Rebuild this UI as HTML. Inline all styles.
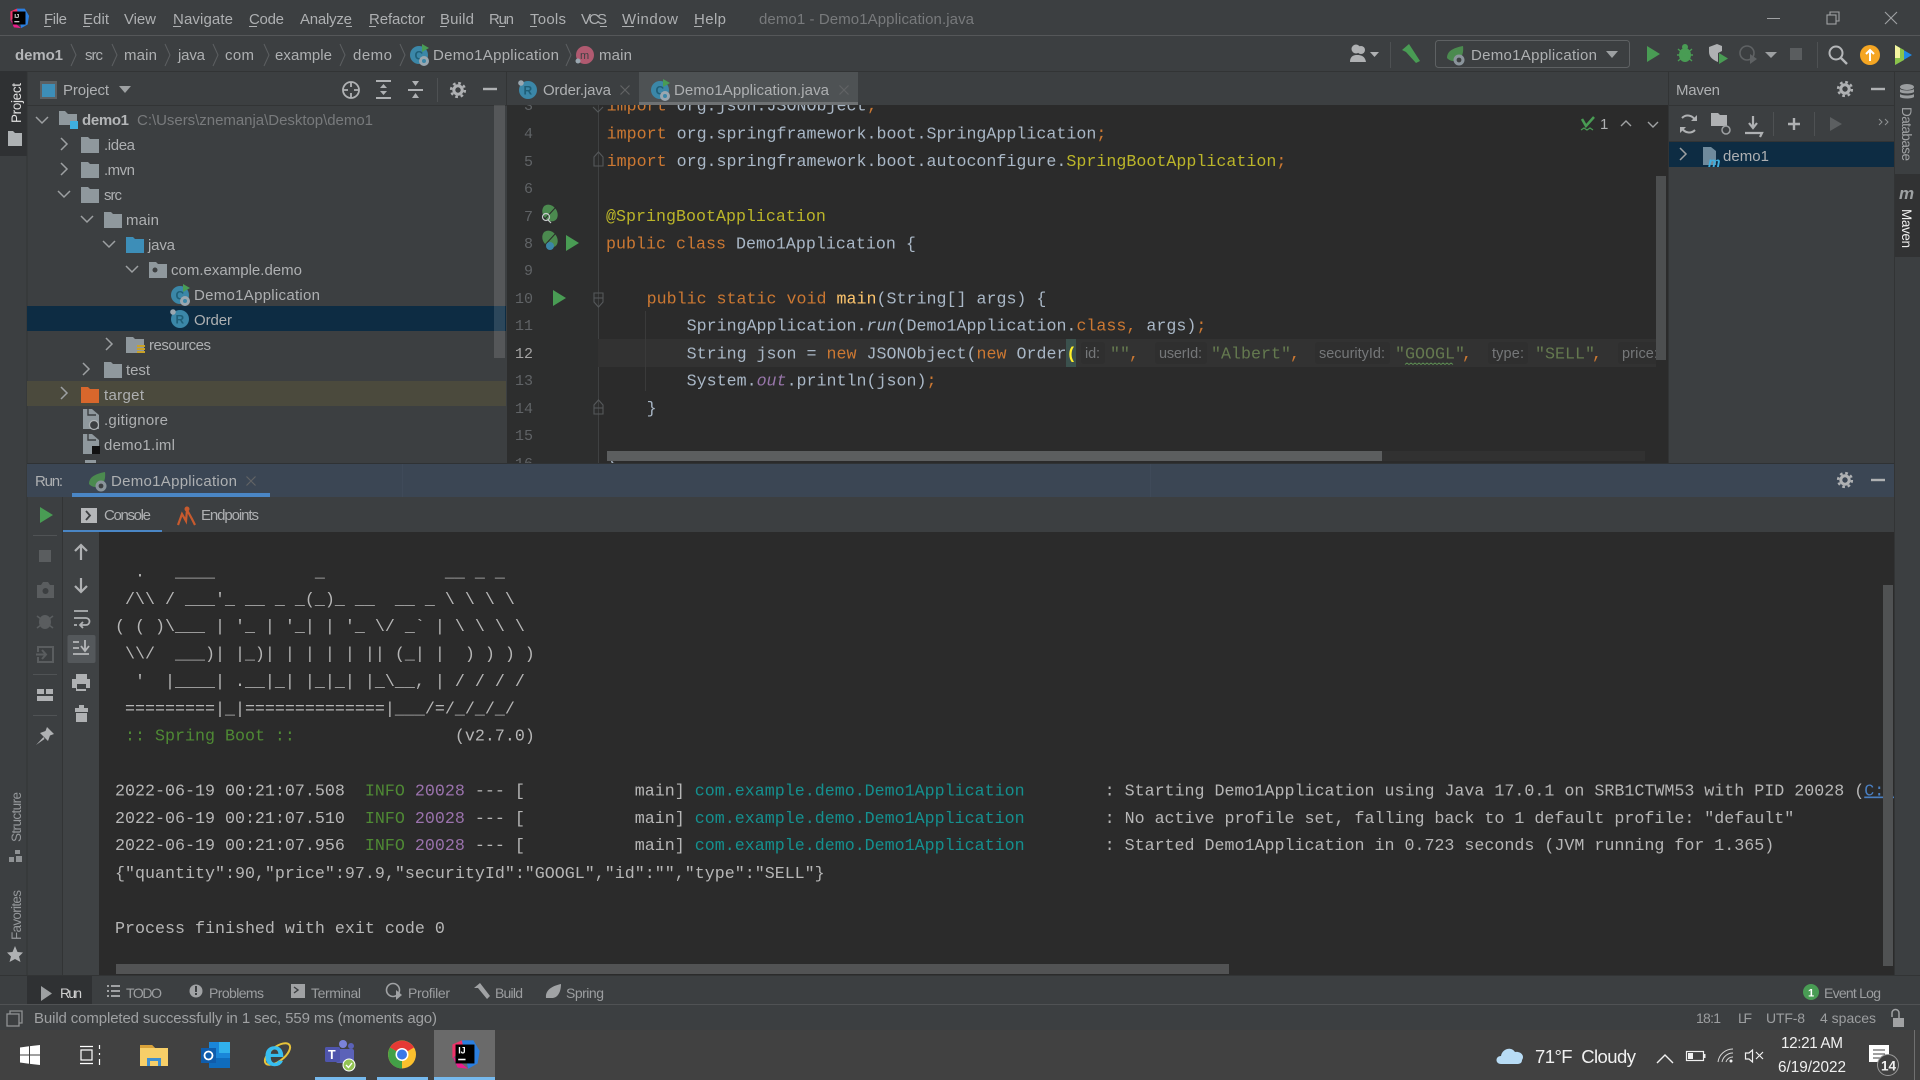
<!DOCTYPE html>
<html><head><meta charset="utf-8"><title>demo1 - Demo1Application.java</title>
<style>
html,body{margin:0;padding:0;background:#3c3f41;width:1920px;height:1080px;overflow:hidden}
svg{display:block;position:absolute;left:0;top:0;filter:blur(.35px)}
text{white-space:pre}
.u{font:15px "Liberation Sans",sans-serif;fill:#aeb0b2}
.d{font:15px "Liberation Sans",sans-serif;fill:#787a7c}
.b{font:bold 15px "Liberation Sans",sans-serif;fill:#b4b6b8}
.s{font:14px "Liberation Sans",sans-serif;fill:#9c9ea0}
.m{font:16.667px "Liberation Mono",monospace;fill:#a9b7c6}
.c{font:16.667px "Liberation Mono",monospace;fill:#b6b6b6}
.n{font:15px "Liberation Mono",monospace;fill:#606366}
.k{fill:#cc7832}.a{fill:#bbb529}.st{fill:#64794f}.g{fill:#4f8a34}.p{fill:#9a72ac}.t{fill:#14908f}
.h{font:14.5px "Liberation Sans",sans-serif;fill:#757779}
.w{font:18.5px "Liberation Sans",sans-serif;fill:#f0f0f0}
.y{font:15.3px "Liberation Sans",sans-serif;fill:#f0f0f0}
</style></head><body>
<svg width="1920" height="1080" viewBox="0 0 1920 1080" xmlns="http://www.w3.org/2000/svg">
<defs>
<clipPath id="ed"><rect x="506" y="105" width="1150" height="358"/></clipPath>
<clipPath id="co"><rect x="99" y="532" width="1795" height="443"/></clipPath>
<path id="cr" d="M-3-6L3 0L-3 6" fill="none" stroke="#9da0a2" stroke-width="1.5"/>
<path id="cd" d="M-6-3L0 3L6-3" fill="none" stroke="#9da0a2" stroke-width="1.5"/>
<path id="bs" d="M0-11L5 0L0 11" fill="none" stroke="#5c5f61" stroke-width="1"/>
<path id="f" d="M0-8H7L9-6H18V8H0Z" fill="#8f989d"/>
<path id="fb" d="M0-8H7L9-6H18V8H0Z" fill="#3d8eb8"/>
<path id="fo" d="M0-8H7L9-6H18V8H0Z" fill="#d8672c"/>
<g id="gear"><circle r="4.2" fill="none" stroke="#afb1b3" stroke-width="3"/><circle r="6.9" fill="none" stroke="#afb1b3" stroke-width="2.4" stroke-dasharray="2.7 2.72"/></g>
<rect id="minus" x="-7" y="-1.2" width="14" height="2.4" fill="#afb1b3"/>
<path id="x" d="M-4.5-4.5L4.5 4.5M4.5-4.5L-4.5 4.5" stroke="#616365" stroke-width="1.2"/>
<path id="play" d="M-6-8L7 0L-6 8Z" fill="#499c54"/>
<g id="bean"><ellipse cx="1" cy="-2" rx="7" ry="9" transform="rotate(-35 1 -2)" fill="#4b8a4f"/><path d="M-5 5L7-8" stroke="#2b2b2b" stroke-width="1"/></g>
<g id="spr"><circle r="9" fill="#3b87a8"/><text x="-4.5" y="4.5" style="font:bold 12px 'Liberation Sans',sans-serif;fill:#1f5f78">C</text><path d="M3-11L10-7L3-3Z" fill="#499c54"/><circle cx="5" cy="6" r="5" fill="#9aa7b0"/><circle cx="5" cy="6" r="2" fill="#3b87a8"/></g>
<g id="ord"><circle r="9" fill="#3b87a8"/><text x="-4.5" y="4.5" style="font:bold 12px 'Liberation Sans',sans-serif;fill:#1f5f78">R</text><circle cx="-7" cy="-7" r="2.8" fill="#9aa7b0"/></g>
<g id="leaf"><path d="M-8 3C-8-4-2-7 8-9C9-1 6 6-1 6C-4 6-6 5-8 3Z" fill="#4b8a4f"/><circle cx="4" cy="5" r="5.5" fill="#8a949b"/><circle cx="4" cy="5" r="2.4" fill="#3c3f41"/></g>
<g id="doc"><path d="M-8-10H1L8-4V10H-8Z" fill="#8f989d"/><path d="M-3-10V-4H5" fill="none" stroke="#3c3f41" stroke-width="1.4"/></g>
<g id="ij"><path d="M-12-9L-3-13L5-10L-12 4Z" fill="#f0346a"/><path d="M-3-13H8L14-3L12 9L3 14Z" fill="#2b7fe0"/><path d="M-12 2L-7 13L3 14Z" fill="#e91e8c"/><rect x="-9" y="-9" width="18" height="18" fill="#000"/></g>
</defs>

<!-- base -->
<rect width="1920" height="1080" fill="#3c3f41"/>
<rect y="35" width="1920" height="1" fill="#555759"/>
<rect y="71" width="1920" height="1" fill="#323435"/>
<rect x="27" y="105" width="1867" height="1" fill="#323435"/>

<!-- title bar -->
<g transform="translate(19 18) scale(.72)"><use href="#ij"/><text x="-6.5" y="0" style="font:bold 8px 'Liberation Sans',sans-serif;fill:#fff">IJ</text><rect x="-6.5" y="4.5" width="7" height="1.4" fill="#fff"/></g>
<text class="u" x="44" y="24" textLength="23">File</text>
<text class="u" x="83" y="24" textLength="26">Edit</text>
<text class="u" x="124" y="24" textLength="32">View</text>
<text class="u" x="173" y="24" textLength="60">Navigate</text>
<text class="u" x="249" y="24" textLength="35">Code</text>
<text class="u" x="300" y="24" textLength="52">Analyze</text>
<text class="u" x="369" y="24" textLength="56">Refactor</text>
<text class="u" x="440" y="24" textLength="34">Build</text>
<text class="u" x="489" y="24" textLength="25">Run</text>
<text class="u" x="530" y="24" textLength="36">Tools</text>
<text class="u" x="581" y="24" textLength="26">VCS</text>
<text class="u" x="622" y="24" textLength="56">Window</text>
<text class="u" x="694" y="24" textLength="32">Help</text>
<g fill="#aeb0b2"><rect x="44" y="26" width="7" height="1"/><rect x="83" y="26" width="7" height="1"/><rect x="173" y="26" width="8" height="1"/><rect x="249" y="26" width="8" height="1"/><rect x="346" y="26" width="6" height="1"/><rect x="369" y="26" width="7" height="1"/><rect x="440" y="26" width="7" height="1"/><rect x="499" y="26" width="6" height="1"/><rect x="530" y="26" width="7" height="1"/><rect x="600" y="26" width="7" height="1"/><rect x="622" y="26" width="12" height="1"/><rect x="694" y="26" width="8" height="1"/></g>
<text class="d" x="759" y="24" textLength="215">demo1 - Demo1Application.java</text>
<rect x="1767" y="18" width="13" height="1" fill="#a0a2a4"/>
<g fill="none" stroke="#a0a2a4" stroke-width="1.1"><rect x="1827" y="15" width="9" height="9"/><path d="M1830 15V12H1839V21H1836"/><path d="M1885 12L1897 24M1897 12L1885 24"/></g>

<!-- breadcrumb -->
<text class="b" x="15" y="60" textLength="48">demo1</text>
<use href="#bs" x="71" y="55"/>
<text class="u" x="85" y="60" textLength="18">src</text>
<use href="#bs" x="112" y="55"/>
<text class="u" x="124" y="60" textLength="33">main</text>
<use href="#bs" x="165" y="55"/>
<text class="u" x="178" y="60" textLength="27">java</text>
<use href="#bs" x="213" y="55"/>
<text class="u" x="225" y="60" textLength="29">com</text>
<use href="#bs" x="264" y="55"/>
<text class="u" x="275" y="60" textLength="57">example</text>
<use href="#bs" x="340" y="55"/>
<text class="u" x="353" y="60" textLength="39">demo</text>
<use href="#bs" x="400" y="55"/>
<use href="#spr" x="419" y="55"/>
<text class="u" x="433" y="60" textLength="126">Demo1Application</text>
<use href="#bs" x="566" y="55"/>
<circle cx="585" cy="55" r="9" fill="#b05a70"/><text x="580" y="59" style="font:11px 'Liberation Sans',sans-serif;fill:#3c3f41">m</text><circle cx="578" cy="61" r="2.5" fill="#9aa7b0"/>
<text class="u" x="599" y="60" textLength="33">main</text>

<!-- main toolbar -->
<g fill="#afb1b3"><circle cx="1356" cy="49" r="4.500"/><circle cx="1361" cy="50" r="4" /><path d="M1350 62C1350 56 1354 55 1357 55C1361 55 1365 56 1366 62Z"/><path d="M1370 52H1379L1374.5 57Z"/></g>
<rect x="1390" y="42" width="1" height="26" fill="#4e5153"/>
<path d="M1402 50L1409 44L1420 61L1416 63L1406 52Z" fill="#499c54"/>
<rect x="1435.5" y="40.5" width="194" height="27" rx="3" fill="none" stroke="#5e6163"/>
<use href="#leaf" x="1455" y="55"/>
<text class="u" x="1471" y="60" textLength="126">Demo1Application</text>
<path d="M1606 51H1618L1612 58Z" fill="#9da0a2"/>
<use href="#play" x="1653" y="54"/>
<g fill="#499c54"><ellipse cx="1685" cy="55" rx="6" ry="7"/><circle cx="1685" cy="47" r="3"/><path d="M1678 49L1692 61M1692 49L1678 61M1677 55H1693" stroke="#499c54" stroke-width="1.400"/></g>
<path d="M1709 47L1717 44L1722 46V51L1718 53V62C1713 60 1709 57 1709 52Z" fill="#afb1b3"/><path d="M1719 53L1728 58.500L1719 64Z" fill="#499c54"/>
<circle cx="1747" cy="53" r="7" fill="none" stroke="#5f6264" stroke-width="1.6"/><path d="M1750 54L1757 59L1750 64Z" fill="#5f6264"/>
<path d="M1765 52H1777L1771 58Z" fill="#9da0a2"/>
<rect x="1790" y="48" width="12" height="12" fill="#5a5d5f"/>
<rect x="1817" y="42" width="1" height="26" fill="#4e5153"/>
<circle cx="1836" cy="53" r="6.500" fill="none" stroke="#b5b7b9" stroke-width="2"/><path d="M1841 58L1847 64" stroke="#b5b7b9" stroke-width="2.4"/>
<circle cx="1870" cy="55" r="10" fill="#f5a623"/><path d="M1870 61V50M1866 54L1870 50L1874 54" stroke="#fff" stroke-width="2" fill="none"/>
<path d="M1895 45L1912 55L1895 65Z" fill="#1e88e5"/><path d="M1895 45L1904 50V60L1895 65Z" fill="#8bc34a"/><path d="M1895 45L1900 48V58L1895 58Z" fill="#f5f5a0"/>

<!-- left stripe -->
<rect y="71" width="27" height="85" fill="#2f3133"/>
<rect x="26.500" y="71" width="1" height="905" fill="#323435"/>
<text transform="translate(21 123) rotate(-90)" style="font:13.500px 'Liberation Sans',sans-serif;fill:#e0e0e0" textLength="40">Project</text>
<path d="M8 131H13L15 133H22V146H8Z" fill="#aeb2b4"/>
<text transform="translate(21 842) rotate(-90)" style="font:13.500px 'Liberation Sans',sans-serif;fill:#94979a" textLength="50">Structure</text>
<g fill="#8f9294"><rect x="15" y="850" width="5" height="4"/><rect x="9" y="857" width="5" height="5"/><rect x="16" y="856" width="6" height="6"/></g>
<text transform="translate(21 940) rotate(-90)" style="font:13.500px 'Liberation Sans',sans-serif;fill:#94979a" textLength="50">Favorites</text>
<path d="M15 946L17.500 952L23 952.500L19 956.500L20.500 962L15 959L9.500 962L11 956.500L7 952.500L12.500 952Z" fill="#afb1b3"/>

<!-- project header -->
<rect x="40" y="81" width="17" height="18" fill="#5c6063"/><rect x="42" y="84" width="13" height="13" fill="#3d8eb8"/>
<text class="u" x="63" y="95" textLength="46">Project</text>
<path d="M119 86H131L125 93Z" fill="#9da0a2"/>
<circle cx="351" cy="90" r="8" fill="none" stroke="#afb1b3" stroke-width="1.800"/><path d="M351 82V87M351 93V98M343 90H348M354 90H359" stroke="#afb1b3" stroke-width="1.800"/>
<g fill="#afb1b3"><rect x="376" y="80" width="15" height="2"/><rect x="376" y="97" width="15" height="2"/><path d="M380 88L383.500 84L387 88ZM380 91L383.500 95L387 91Z"/></g>
<g fill="#afb1b3"><rect x="408" y="89" width="15" height="2"/><path d="M412 81L415.500 86L419 81ZM412 98L415.500 93L419 98Z"/></g>
<rect x="437" y="78" width="1" height="24" fill="#4e5153"/>
<use href="#gear" x="458" y="90"/>
<use href="#minus" x="490" y="89"/>

<!-- tabs -->
<rect x="506" y="72" width="1" height="33" fill="#323435"/>
<use href="#ord" x="528" y="90"/>
<text class="u" x="543" y="95" textLength="68">Order.java</text>
<use href="#x" x="625" y="90"/>
<rect x="639" y="72" width="219" height="33" fill="#4e5254"/>
<rect x="639" y="102" width="219" height="3" fill="#6f7274"/>
<use href="#spr" x="660" y="90"/>
<text class="u" x="674" y="95" textLength="155">Demo1Application.java</text>
<use href="#x" x="844" y="90"/>

<!-- project tree -->
<rect x="27" y="306" width="479" height="25" fill="#0d2c43"/>
<rect x="27" y="381" width="479" height="25" fill="#4b4a3d"/>
<rect x="494" y="105" width="11" height="253" fill="#ffffff" fill-opacity=".13"/>
<use href="#cd" x="42" y="120"/>
<path d="M59 111H65L68 114H77V125H59Z" fill="#8f989d"/><rect x="70" y="121" width="8" height="8" fill="#3fb0e0"/>
<text class="b" x="82" y="125" textLength="47">demo1</text>
<text class="d" x="137" y="125" textLength="236">C:\Users\znemanja\Desktop\demo1</text>
<use href="#cr" x="64" y="144"/><use href="#f" x="81" y="145"/><text class="u" x="104" y="150" textLength="31">.idea</text>
<use href="#cr" x="64" y="169"/><use href="#f" x="81" y="170"/><text class="u" x="104" y="175" textLength="31">.mvn</text>
<use href="#cd" x="64" y="194"/><use href="#f" x="81" y="195"/><text class="u" x="104" y="200" textLength="18">src</text>
<use href="#cd" x="87" y="219"/><use href="#f" x="104" y="220"/><text class="u" x="126" y="225" textLength="33">main</text>
<use href="#cd" x="109" y="244"/><use href="#fb" x="126" y="245"/><text class="u" x="148" y="250" textLength="27">java</text>
<use href="#cd" x="132" y="269"/><use href="#f" x="149" y="270"/><circle cx="155" cy="270" r="2.500" fill="#3c3f41"/><text class="u" x="171" y="275" textLength="131">com.example.demo</text>
<use href="#spr" x="180" y="295"/><text class="u" x="194" y="300" textLength="126">Demo1Application</text>
<use href="#ord" x="180" y="319"/><text class="u" x="194" y="325" textLength="38">Order</text>
<use href="#cr" x="109" y="344"/><use href="#f" x="126" y="345"/><g fill="#c9a227"><rect x="137" y="345" width="8" height="2"/><rect x="137" y="348" width="8" height="2"/><rect x="137" y="351" width="8" height="2"/></g><text class="u" x="149" y="350" textLength="62">resources</text>
<use href="#cr" x="86" y="369"/><use href="#f" x="104" y="370"/><text class="u" x="126" y="375" textLength="24">test</text>
<use href="#cr" x="64" y="393"/><use href="#fo" x="81" y="395"/><text class="u" x="104" y="400" textLength="40">target</text>
<use href="#doc" x="91" y="419"/><circle cx="94" cy="425" r="4.500" fill="#3c3f41" stroke="#aeb2b4" stroke-width="1.200"/><text class="u" x="104" y="425" textLength="64">.gitignore</text>
<use href="#doc" x="91" y="444"/><rect x="92" y="446" width="8" height="8" fill="#111"/><text class="u" x="104" y="450" textLength="71">demo1.iml</text>
<rect x="85" y="460" width="11" height="3" fill="#8f989d"/>

<!-- editor -->
<rect x="507" y="105" width="1161" height="358" fill="#2b2b2b"/>
<rect x="507" y="105" width="91" height="358" fill="#2d2e2e"/>
<rect x="598" y="105" width="1" height="358" fill="#3f4142"/>
<rect x="598" y="339" width="1058" height="28" fill="#323232"/>
<rect x="645" y="311" width="1" height="80" fill="#3a3a3a"/>
<g clip-path="url(#ed)" text-anchor="end">
<text class="n" x="533" y="110">3</text><text class="n" x="533" y="138">4</text><text class="n" x="533" y="166">5</text><text class="n" x="533" y="193">6</text><text class="n" x="533" y="221">7</text><text class="n" x="533" y="248">8</text><text class="n" x="533" y="275">9</text><text class="n" x="533" y="303">10</text><text class="n" x="533" y="330">11</text><text class="n" x="533" y="358" style="fill:#a4a3a3">12</text><text class="n" x="533" y="385">13</text><text class="n" x="533" y="413">14</text><text class="n" x="533" y="440">15</text><text class="n" x="533" y="468">16</text>
</g>
<g clip-path="url(#ed)">
<text class="m" x="606.600" y="110.500"><tspan class="k">import</tspan> org.json.JSONObject<tspan class="k">;</tspan></text>
<text class="m" x="606.600" y="138.500"><tspan class="k">import</tspan> org.springframework.boot.SpringApplication<tspan class="k">;</tspan></text>
<text class="m" x="606.600" y="166"><tspan class="k">import</tspan> org.springframework.boot.autoconfigure.<tspan class="a">SpringBootApplication</tspan><tspan class="k">;</tspan></text>
<text class="m a" x="606" y="221">@SpringBootApplication</text>
<text class="m" x="606" y="248.500"><tspan class="k">public class</tspan> Demo1Application {</text>
<text class="m" x="646.600" y="303.500"><tspan class="k">public static void</tspan> <tspan style="fill:#ffc66d">main</tspan>(String[] args) {</text>
<text class="m" x="686.600" y="330.500">SpringApplication.<tspan style="font-style:italic">run</tspan>(Demo1Application.<tspan class="k">class,</tspan> args)<tspan class="k">;</tspan></text>
<rect x="1066" y="339" width="10" height="28" fill="#3b514d"/>
<text class="m" x="686.600" y="358.500">String json = <tspan class="k">new</tspan> JSONObject(<tspan class="k">new</tspan> Order<tspan style="fill:#ffef28;font-weight:bold">(</tspan></text>
<rect x="1081" y="342" width="24" height="22" rx="3" fill="#2f2f2f"/>
<text class="h" x="1085" y="358" textLength="15">id:</text>
<text class="m st" x="1110" y="358.500">""</text><text class="m k" x="1129" y="358.500">,</text>
<rect x="1155" y="342" width="52" height="22" rx="3" fill="#2f2f2f"/>
<text class="h" x="1159" y="358" textLength="43">userId:</text>
<text class="m st" x="1211" y="358.500">"Albert"</text><text class="m k" x="1290" y="358.500">,</text>
<rect x="1315" y="342" width="75" height="22" rx="3" fill="#2f2f2f"/>
<text class="h" x="1319" y="358" textLength="66">securityId:</text>
<text class="m st" x="1395" y="358.500">"GOOGL"</text><text class="m k" x="1462" y="358.500">,</text>
<path d="M1405 364.500l2-1.500 2 1.500 2-1.500 2 1.500 2-1.500 2 1.500 2-1.500 2 1.500 2-1.500 2 1.500 2-1.500 2 1.500 2-1.500 2 1.500 2-1.500 2 1.500 2-1.500 2 1.500 2-1.500 2 1.500 2-1.500 2 1.500 2-1.500 2 1.500" fill="none" stroke="#5c8a52" stroke-width="1"/>
<rect x="1488" y="342" width="40" height="22" rx="3" fill="#2f2f2f"/>
<text class="h" x="1492" y="358" textLength="32">type:</text>
<text class="m st" x="1535" y="358.500">"SELL"</text><text class="m k" x="1592" y="358.500">,</text>
<rect x="1618" y="342" width="40" height="22" rx="3" fill="#2f2f2f"/>
<text class="h" x="1622" y="358" textLength="36">price:</text>
<text class="m" x="686.600" y="385.500">System.<tspan style="fill:#9876aa;font-style:italic">out</tspan>.println(json)<tspan class="k">;</tspan></text>
<text class="m" x="646.600" y="413">}</text>
<text class="m" x="606.600" y="468">}</text>
</g>
<!-- fold marks -->
<g fill="none" stroke="#55585a" stroke-width="1.100">
<path d="M593 107L598 112L603 107"/><path d="M594 166V157L598.500 152L603 157V166Z"/><path d="M594 293H603V302L598.500 307L594 302Z"/><path d="M594 298H603"/><path d="M594 414V405L598.500 400L603 405V414Z"/><path d="M594 408H603"/>
</g>
<use href="#bean" x="549" y="215"/><circle cx="546" cy="217" r="3.500" fill="none" stroke="#c8cacc" stroke-width="1.200"/><path d="M548 220L551 223" stroke="#c8cacc" stroke-width="1.200"/>
<use href="#bean" x="549" y="241"/><circle cx="550" cy="246" r="4" fill="#3b87a8"/>
<use href="#play" x="572" y="243"/><use href="#play" x="559" y="298"/>
<!-- editor status -->
<path d="M1582 119L1586 126L1594 117" fill="none" stroke="#499c54" stroke-width="2.500"/><path d="M1581 130l3-2 3 2 3-2 3 2" fill="none" stroke="#499c54" stroke-width="1.200"/>
<text class="u" x="1600" y="129">1</text>
<path d="M1621 126L1626 121L1631 126M1648 122L1653 127L1658 122" fill="none" stroke="#a0a2a4" stroke-width="1.400"/>
<rect x="1656" y="176" width="10" height="184" fill="#4d4f50"/>
<rect x="607" y="451" width="1038" height="10" fill="#313131"/>
<rect x="607" y="451" width="775" height="10" fill="#5c5e5f"/>

<!-- maven -->
<rect x="1668" y="71" width="1" height="392" fill="#323435"/>
<text class="u" x="1676" y="95" textLength="44">Maven</text>
<use href="#gear" x="1845" y="89"/>
<use href="#minus" x="1878" y="89"/>
<rect x="1669" y="141" width="225" height="1" fill="#323435"/>
<path d="M1682 118A8 8 0 0 1 1695 120M1695 130A8 8 0 0 1 1682 128" fill="none" stroke="#afb1b3" stroke-width="2"/><path d="M1691 121H1697V115ZM1686 127H1680V133Z" fill="#afb1b3"/>
<path d="M1711 113H1718L1720 115H1727V126H1711Z" fill="#afb1b3"/><circle cx="1726" cy="130" r="4" fill="none" stroke="#9da0a2" stroke-width="1.500"/>
<path d="M1753 116V127M1749 123L1753 128L1757 123M1745 133H1762L1760 137" fill="none" stroke="#afb1b3" stroke-width="2.200"/>
<rect x="1773" y="112" width="1" height="24" fill="#4e5153"/>
<path d="M1794 118V130M1788 124H1800" stroke="#afb1b3" stroke-width="2.400"/>
<rect x="1814" y="112" width="1" height="24" fill="#4e5153"/>
<path d="M1830 117L1842 124L1830 131Z" fill="#5c5f61"/>
<path d="M1879 119L1882 122L1879 125M1885 119L1888 122L1885 125" fill="none" stroke="#8f9294" stroke-width="1"/>
<rect x="1669" y="142" width="225" height="25" fill="#0d2c43"/>
<use href="#cr" x="1683" y="154"/>
<path d="M1703 147H1711L1716 151V165H1703Z" fill="#6f8a9c"/><text x="1708" y="167" style="font:bold italic 14px 'Liberation Sans',sans-serif;fill:#3fb0e0">m</text>
<text class="u" x="1723" y="161" textLength="46">demo1</text>

<!-- right stripe -->
<rect x="1894" y="71" width="1" height="905" fill="#323435"/>
<rect x="1895" y="174" width="25" height="83" fill="#313233"/>
<g fill="#9a9d9f"><ellipse cx="1907" cy="87" rx="7" ry="3"/><path d="M1900 89C1902 91 1912 91 1914 89V92C1912 94 1902 94 1900 92ZM1900 94C1902 96 1912 96 1914 94V97C1912 99 1902 99 1900 97Z"/></g>
<text transform="translate(1902 107) rotate(90)" style="font:13.500px 'Liberation Sans',sans-serif;fill:#a0a2a4" textLength="54">Database</text>
<text x="1899" y="199" style="font:bold italic 17px 'Liberation Sans',sans-serif;fill:#9da0a2">m</text>
<text transform="translate(1902 209) rotate(90)" style="font:13.500px 'Liberation Sans',sans-serif;fill:#eeeeee" textLength="39">Maven</text>

<!-- run header -->
<rect x="27" y="463" width="1867" height="34" fill="#3b4654"/>
<rect x="27" y="463" width="1867" height="1" fill="#2f3234"/>
<rect x="402" y="464" width="1" height="33" fill="#3f4a59"/>
<rect x="1150" y="464" width="1" height="33" fill="#3f4a59"/>
<text class="u" x="35" y="486" textLength="28">Run:</text>
<use href="#leaf" x="97" y="481"/>
<text class="u" x="111" y="486" textLength="126">Demo1Application</text>
<use href="#x" x="251" y="481"/>
<rect x="72" y="493" width="198" height="4" fill="#4a86c5"/>
<use href="#gear" x="1845" y="480"/>
<use href="#minus" x="1878" y="480"/>

<!-- run toolbars -->
<rect x="62" y="497" width="1" height="479" fill="#323435"/>
<rect x="63" y="497" width="1831" height="34" fill="#3c3f41"/>
<rect x="63" y="530" width="99" height="2.500" fill="#4a86c5"/>
<rect x="99" y="532" width="1" height="1" fill="#323435"/>
<use href="#play" x="46" y="515"/>
<rect x="81" y="508" width="16" height="15" fill="#b5b7b9"/><path d="M86 511L90 515.500L86 520" fill="none" stroke="#3c3f41" stroke-width="1.800"/>
<text class="u" x="104" y="520" textLength="47">Console</text>
<path d="M178 525L182 514L186 521L187 510L192 519L195 525" fill="none" stroke="#c75a2e" stroke-width="2.200"/><circle cx="187" cy="509" r="2.500" fill="#c75a2e"/>
<text class="u" x="201" y="520" textLength="58">Endpoints</text>
<g fill="#3f4244"><rect x="63" y="532" width="36" height="444"/></g>
<rect x="33" y="535" width="24" height="1" fill="#505355"/><rect x="33" y="674" width="24" height="1" fill="#505355"/><rect x="33" y="715" width="24" height="1" fill="#505355"/>
<rect x="39" y="550" width="12" height="12" fill="#5a5d5f"/>
<path d="M37 585H41L43 582H48L50 585H54V598H37Z" fill="#5a5d5f"/><circle cx="45.500" cy="591" r="3" fill="#3c3f41"/>
<ellipse cx="45" cy="622" rx="6" ry="7" fill="#5a5d5f"/><path d="M37 616L53 628M53 616L37 628" stroke="#5a5d5f" stroke-width="1.600"/>
<path d="M38 652V647H53V662H38V657M36 654.500H46M42 650L46 654.500L42 659" fill="none" stroke="#5a5d5f" stroke-width="2"/>
<g fill="#afb1b3"><rect x="37" y="689" width="7" height="5"/><rect x="46" y="689" width="7" height="5"/><rect x="37" y="696" width="16" height="5"/></g>
<path d="M47 727L54 734L50 735.500L48 741L40 733L45.500 731ZM43.500 737L36 745L44.500 739Z" fill="#afb1b3"/>
<path d="M81 545V560M75 551L81 545L87 551" fill="none" stroke="#afb1b3" stroke-width="2.200"/>
<path d="M81 578V592M75 586L81 592L87 586" fill="none" stroke="#afb1b3" stroke-width="2.200"/>
<path d="M74 611H88M74 618H86A2.500 2.500 0 0 1 86 625H80M83 622L80 625L83 628M74 625H77" fill="none" stroke="#afb1b3" stroke-width="1.800"/>
<rect x="67.500" y="635" width="28" height="28" rx="2" fill="#54585b"/>
<path d="M73 642H79M73 648H79M73 654H89M85 640V651M81 646L85 651L89 646" fill="none" stroke="#b5b7b9" stroke-width="1.800"/>
<path d="M76 674H87V679H90V688H86V691H76V688H72V679H76Z" fill="#afb1b3"/><rect x="77" y="684" width="9" height="5" fill="#3f4244"/>
<path d="M75 708H88V712H75ZM76 713H87V722H76ZM79 705H84V708H79Z" fill="#afb1b3"/>

<!-- console -->
<rect x="99" y="532" width="1795" height="443" fill="#2b2b2b"/>
<g clip-path="url(#co)">
<text class="c" x="115" y="576.500">  .   ____          _            __ _ _</text>
<text class="c" x="115" y="604"> /\\ / ___'_ __ _ _(_)_ __  __ _ \ \ \ \</text>
<text class="c" x="115" y="631">( ( )\___ | '_ | '_| | '_ \/ _` | \ \ \ \</text>
<text class="c" x="115" y="658.500"> \\/  ___)| |_)| | | | | || (_| |  ) ) ) )</text>
<text class="c" x="115" y="686">  '  |____| .__|_| |_|_| |_\__, | / / / /</text>
<text class="c" x="115" y="713.500"> =========|_|==============|___/=/_/_/_/</text>
<text class="c" x="115" y="740.500"> <tspan class="g">:: Spring Boot ::</tspan>                (v2.7.0)</text>
<text class="c" x="115" y="795.500">2022-06-19 00:21:07.508  <tspan class="g">INFO</tspan> <tspan class="p">20028</tspan> --- [           main] <tspan class="t">com.example.demo.Demo1Application</tspan>        : Starting Demo1Application using Java 17.0.1 on SRB1CTWM53 with PID 20028 (<tspan style="fill:#4a7fc1;text-decoration:underline">C:\</tspan></text>
<text class="c" x="115" y="823">2022-06-19 00:21:07.510  <tspan class="g">INFO</tspan> <tspan class="p">20028</tspan> --- [           main] <tspan class="t">com.example.demo.Demo1Application</tspan>        : No active profile set, falling back to 1 default profile: "default"</text>
<text class="c" x="115" y="850">2022-06-19 00:21:07.956  <tspan class="g">INFO</tspan> <tspan class="p">20028</tspan> --- [           main] <tspan class="t">com.example.demo.Demo1Application</tspan>        : Started Demo1Application in 0.723 seconds (JVM running for 1.365)</text>
<text class="c" x="115" y="878">{"quantity":90,"price":97.9,"securityId":"GOOGL","id":"","type":"SELL"}</text>
<text class="c" x="115" y="933">Process finished with exit code 0</text>
</g>
<rect x="116" y="964" width="1113" height="10" fill="#525354"/>
<rect x="1883" y="585" width="10" height="381" fill="#505253"/>

<!-- bottom tool stripe -->
<rect x="0" y="975" width="1920" height="1" fill="#323435"/>
<rect x="27" y="976" width="65" height="28" fill="#2f3133"/>
<path d="M41 986L52 993.500L41 1001Z" fill="#9da0a2"/>
<text class="u" x="60" y="998" style="fill:#d0d0d0;font-size:14px" textLength="22">Run</text>
<g fill="#a0a2a4"><rect x="107" y="985" width="2" height="2"/><rect x="107" y="990" width="2" height="2"/><rect x="107" y="995" width="2" height="2"/><rect x="111" y="985" width="9" height="2"/><rect x="111" y="990" width="9" height="2"/><rect x="111" y="995" width="9" height="2"/></g>
<text class="s" x="126" y="998" textLength="36">TODO</text>
<circle cx="196" cy="991" r="6.500" fill="#a0a2a4"/><rect x="195" y="986" width="2" height="6" fill="#3c3f41"/><rect x="195" y="993" width="2" height="2" fill="#3c3f41"/>
<text class="s" x="209" y="998" textLength="55">Problems</text>
<rect x="291" y="984" width="14" height="14" fill="#a0a2a4"/><path d="M294 987L298 990L294 993" fill="none" stroke="#3c3f41" stroke-width="1.400"/>
<text class="s" x="311" y="998" textLength="50">Terminal</text>
<circle cx="393" cy="990" r="6.500" fill="none" stroke="#a0a2a4" stroke-width="1.600"/><path d="M396 990L402 995L396 1000Z" fill="#a0a2a4"/>
<text class="s" x="408" y="998" textLength="42">Profiler</text>
<path d="M474 988L480 983L490 996L487 999L478 988Z" fill="#a0a2a4"/>
<text class="s" x="495" y="998" textLength="28">Build</text>
<path d="M546 998C545 990 552 986 561 984C561 993 557 998 552 998Z" fill="#a0a2a4"/>
<text class="s" x="566" y="998" textLength="38">Spring</text>
<circle cx="1811" cy="992" r="8" fill="#499c54"/><text x="1808" y="996.500" style="font:bold 11px 'Liberation Sans',sans-serif;fill:#fff">1</text>
<text class="s" x="1824" y="998" textLength="57">Event Log</text>

<!-- status bar -->
<rect x="0" y="1004" width="1920" height="1" fill="#505254"/>
<rect x="7" y="1014" width="12" height="12" fill="none" stroke="#8f9294" stroke-width="1.300"/><path d="M10 1014V1011H22V1023H19" fill="none" stroke="#8f9294" stroke-width="1.300"/>
<text class="u" x="34" y="1023" style="fill:#9fa1a3" textLength="403">Build completed successfully in 1 sec, 559 ms (moments ago)</text>
<text class="s" x="1696" y="1023" textLength="25">18:1</text>
<text class="s" x="1738" y="1023" textLength="14">LF</text>
<text class="s" x="1766" y="1023" textLength="39">UTF-8</text>
<text class="s" x="1820" y="1023" textLength="56">4 spaces</text>
<rect x="1893" y="1018" width="11" height="9" fill="#a0a2a4"/><path d="M1892 1017V1013A3.500 3.500 0 0 1 1899 1013V1018" fill="none" stroke="#a0a2a4" stroke-width="1.500"/>

<!-- taskbar -->
<rect y="1030" width="1920" height="50" fill="#414141"/>
<rect x="434" y="1030" width="61" height="50" fill="#6a6a6a"/>
<g fill="#76b9ed"><rect x="315" y="1077" width="51" height="3"/><rect x="377" y="1077" width="51" height="3"/><rect x="434" y="1077" width="61" height="3"/></g>
<g fill="#fff"><path d="M20 1047.500L29 1046.300V1054.500H20ZM30 1046.100L40 1045V1054.500H30ZM20 1055.500H29V1063.700L20 1062.500ZM30 1055.500H40V1065L30 1063.900Z"/></g>
<g fill="none" stroke="#fff" stroke-width="1.200"><rect x="81" y="1050" width="11" height="10"/><path d="M80 1046.500H93M80 1063.500H93M99.500 1045V1049M99.500 1053V1055M99.500 1059V1065"/></g>
<path d="M140 1045H152L155 1048H168V1066H140Z" fill="#f7cf68"/><path d="M140 1045H152L155 1048H140Z" fill="#d9a23a"/><path d="M147 1066V1058H161V1066H158V1061H150V1066Z" fill="#3f8fcf"/>
<rect x="209" y="1042" width="21" height="22" fill="#1a86d9"/><rect x="219" y="1042" width="11" height="11" fill="#31b1ec"/><path d="M209 1058L230 1058V1068H209Z" fill="#0f6cbd"/><rect x="201" y="1048" width="15" height="15" fill="#0f5cab"/><circle cx="208.500" cy="1055.500" r="4" fill="none" stroke="#fff" stroke-width="1.800"/>
<ellipse cx="277.500" cy="1054" rx="15" ry="7" transform="rotate(-38 277.500 1054)" fill="none" stroke="#e8c33a" stroke-width="2"/>
<text x="264" y="1066" style="font:bold 37px 'Liberation Sans',sans-serif;fill:#37bdf0">e</text>
<circle cx="343" cy="1044" r="4" fill="#7b83d8"/><circle cx="351" cy="1046" r="3" fill="#5b62b8"/><rect x="336" y="1049" width="18" height="14" rx="2" fill="#5b62b8"/><rect x="325" y="1047" width="15" height="15" rx="1.500" fill="#4f55ad"/><text x="328" y="1059" style="font:bold 12.500px 'Liberation Sans',sans-serif;fill:#fff">T</text><circle cx="349" cy="1065" r="6" fill="#92c353" stroke="#fff" stroke-width="1"/><path d="M346 1065L348.500 1067.500L352 1063" fill="none" stroke="#fff" stroke-width="1.400"/>
<circle cx="402" cy="1054.500" r="14" fill="#fbc02d"/><path d="M402 1054.500L390 1047.500A14 14 0 0 1 414 1047.500Z" fill="#e53935"/><path d="M402 1054.500L402 1068.500A14 14 0 0 1 390 1047.500Z" fill="#43a047"/><circle cx="402" cy="1054.500" r="6.500" fill="#fff"/><circle cx="402" cy="1054.500" r="5" fill="#3b78e7"/>
<g transform="translate(465 1054) scale(1.050)"><use href="#ij"/><text x="-6.500" y="-.5" style="font:bold 8.500px 'Liberation Sans',sans-serif;fill:#fff">IJ</text><rect x="-6.500" y="4.500" width="7" height="1.500" fill="#fff"/></g>
<path d="M1501 1064C1495 1064 1495 1056 1501 1056C1502 1049 1511 1046 1515 1052C1521 1051 1525 1056 1522 1060C1522 1063 1520 1064 1517 1064Z" fill="#b8dcf5"/>
<text class="w" x="1535" y="1063" textLength="101">71°F  Cloudy</text>
<path d="M1657 1063L1665 1055L1673 1063" fill="none" stroke="#f0f0f0" stroke-width="1.400"/>
<rect x="1686.500" y="1051.500" width="17" height="9" fill="none" stroke="#f0f0f0" stroke-width="1.200"/><rect x="1688" y="1053" width="5" height="6" fill="#f0f0f0"/><rect x="1704" y="1054" width="1.500" height="4" fill="#f0f0f0"/>
<path d="M1718 1062A15 15 0 0 1 1733 1049M1722 1062A11 11 0 0 1 1733 1053M1726 1062A7 7 0 0 1 1733 1057" fill="none" stroke="#d8d8d8" stroke-width="1"/><circle cx="1731" cy="1061" r="1.500" fill="#f0f0f0"/>
<path d="M1745.500 1053H1749L1752.500 1050V1062L1749 1059H1745.500ZM1756 1052L1763 1059M1763 1052L1756 1059" fill="none" stroke="#f0f0f0" stroke-width="1.200"/>
<text class="y" x="1781" y="1048" textLength="62">12:21 AM</text>
<text class="y" x="1778" y="1072" textLength="68">6/19/2022</text>
<path d="M1869 1045H1889V1062H1869Z" fill="#fff"/><path d="M1873 1050H1885M1873 1054H1885M1873 1058H1881" stroke="#414141" stroke-width="1"/>
<circle cx="1888" cy="1065" r="10.500" fill="#414141" stroke="#9a9a9a" stroke-width="1"/><text x="1881" y="1070.500" style="font:bold 13.500px 'Liberation Sans',sans-serif;fill:#f0f0f0">14</text>
<rect x="1914" y="1030" width="1" height="50" fill="#707070"/>
</svg>
</body></html>
